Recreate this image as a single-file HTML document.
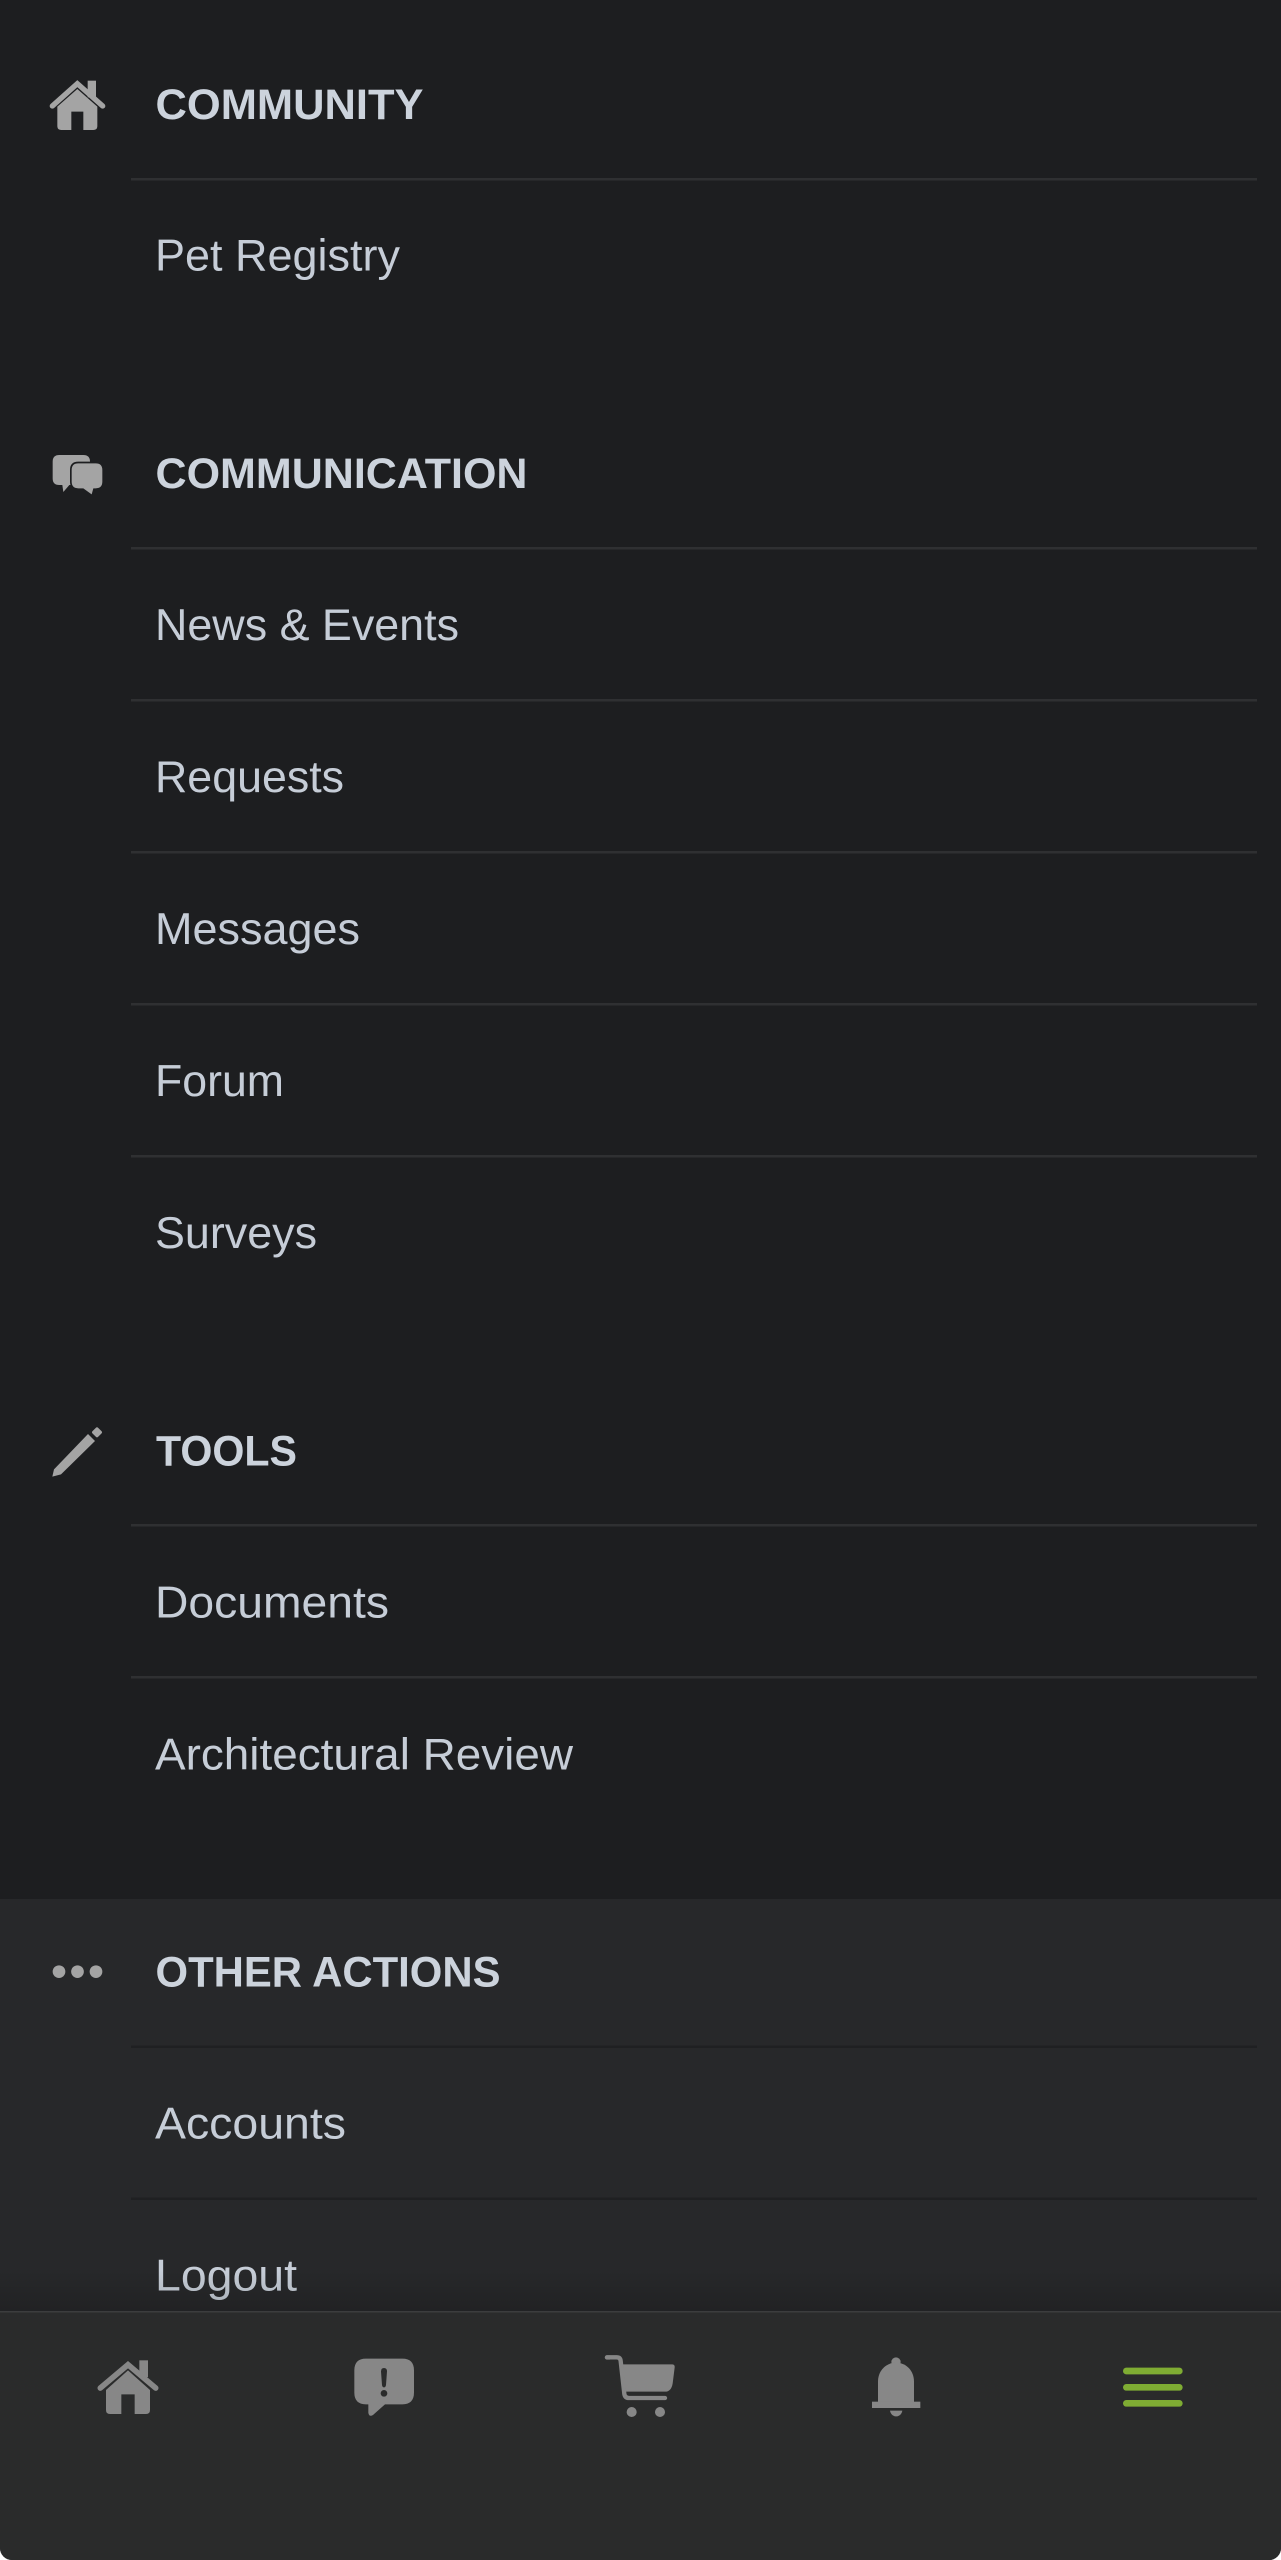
<!DOCTYPE html>
<html lang="en"><head><meta charset="utf-8"><title>Menu</title>
<style>
html,body{margin:0;padding:0;background:#fff;width:1281px;height:2560px;overflow:hidden}
#r{position:absolute;left:0;top:0;width:1281px;height:2560px;overflow:hidden;background:#1d1e20;border-radius:0 0 12px 12px}
svg{display:block}
text{font-family:"Liberation Sans",sans-serif}
.h{font-size:43px;font-weight:700;fill:#ccd3dc}
.t{font-size:44.500px;font-weight:400;fill:#c6cdd7}
</style></head><body><div id="r">
<svg width="1281" height="2560" viewBox="0 0 1281 2560" xmlns="http://www.w3.org/2000/svg">
<defs>
<linearGradient id="s" x1="0" y1="0" x2="0" y2="1"><stop offset="0" stop-color="#000" stop-opacity="0"/><stop offset="1" stop-color="#000" stop-opacity=".16"/></linearGradient>
</defs>
<rect x="0" y="1899" width="1281" height="420" fill="#27282a"/>

<g fill="#2f3032">
<rect x="131" y="178" width="1126" height="2.500"/>
<rect x="131" y="547" width="1126" height="2.500"/>
<rect x="131" y="699" width="1126" height="2.500"/>
<rect x="131" y="851" width="1126" height="2.500"/>
<rect x="131" y="1003" width="1126" height="2.500"/>
<rect x="131" y="1155" width="1126" height="2.500"/>
<rect x="131" y="1524" width="1126" height="2.500"/>
<rect x="131" y="1676" width="1126" height="2.500"/>
</g>
<g fill="#1f2022">
<rect x="131" y="2045.500" width="1126" height="2.500"/>
<rect x="131" y="2197.500" width="1126" height="2.500"/>
</g>

<text class="h" x="155.500" y="119" textLength="268" lengthAdjust="spacingAndGlyphs">COMMUNITY</text>
<text class="t" x="155" y="270.500" textLength="245" lengthAdjust="spacingAndGlyphs">Pet Registry</text>
<text class="h" x="155.500" y="488" textLength="372" lengthAdjust="spacingAndGlyphs">COMMUNICATION</text>
<text class="t" x="155" y="640" textLength="304" lengthAdjust="spacingAndGlyphs">News &amp; Events</text>
<text class="t" x="155" y="792" textLength="189" lengthAdjust="spacingAndGlyphs">Requests</text>
<text class="t" x="155" y="944" textLength="205" lengthAdjust="spacingAndGlyphs">Messages</text>
<text class="t" x="155" y="1096" textLength="129" lengthAdjust="spacingAndGlyphs">Forum</text>
<text class="t" x="155" y="1248" textLength="162" lengthAdjust="spacingAndGlyphs">Surveys</text>
<text class="h" x="156" y="1465.500" textLength="141" lengthAdjust="spacingAndGlyphs">TOOLS</text>
<text class="t" x="155" y="1617.500" textLength="234" lengthAdjust="spacingAndGlyphs">Documents</text>
<text class="t" x="155" y="1769.500" textLength="418" lengthAdjust="spacingAndGlyphs">Architectural Review</text>
<text class="h" x="155.500" y="1986.500" textLength="345" lengthAdjust="spacingAndGlyphs">OTHER ACTIONS</text>
<text class="t" x="155" y="2138.500" textLength="191" lengthAdjust="spacingAndGlyphs">Accounts</text>
<text class="t" x="155" y="2290.500" textLength="142" lengthAdjust="spacingAndGlyphs">Logout</text>

<!-- section house -->
<g transform="translate(0,40) scale(.33333)" fill="#a4a4a4">
<path d="M263 122h25v50h-25z"/>
<path d="M157 198 232 131 308 198" fill="none" stroke="#a4a4a4" stroke-width="16" stroke-linecap="round" stroke-linejoin="miter"/>
<path d="M172 200 232 147 292 200V258Q292 270 280 270H250V215H214V270H184Q172 270 172 258Z"/>
</g>
<!-- bubbles -->
<g transform="translate(0,420) scale(.33333)" fill="#a4a4a4">
<path d="M178 105H250Q270 105 270 125V175Q270 195 250 195H208L190 216 187 195H178Q158 195 158 175V125Q158 105 178 105Z"/>
<path d="M235 130H287Q307 130 307 150V185Q307 205 287 205H280L275 223 250 205H235Q215 205 215 185V150Q215 130 235 130Z" stroke="#1d1e20" stroke-width="10" paint-order="stroke"/>
</g>
<!-- pencil -->
<g transform="translate(0,1400) scale(.33333)" fill="#a4a4a4">
<path d="M157 230 162 208 264 102 285 123 183 223Z"/>
<rect x="279" y="85" width="24" height="24" rx="5" transform="rotate(45 291 97)"/>
</g>
<!-- dots -->
<g transform="translate(0,1880) scale(.33333)" fill="#a4a4a4">
<circle cx="177" cy="275" r="19"/><circle cx="232.500" cy="275" r="19"/><circle cx="288" cy="275" r="19"/>
</g>

<!-- tab bar -->
<rect x="0" y="2270" width="1281" height="42" fill="url(#s)"/>
<rect x="0" y="2312" width="1281" height="248" fill="#2a2b2b"/>
<rect x="0" y="2311" width="1281" height="1.500" fill="#3c3d3e"/>

<g transform="translate(0,2280) scale(.33333)" fill="#878787">
<path d="M418 241h26v50h-26z"/>
<path d="M301 324 384 254 467 324" fill="none" stroke="#878787" stroke-width="17" stroke-linecap="round"/>
<path d="M318 330 384 271 450 330V390Q450 402 438 402H404V343H364V402H330Q318 402 318 390Z"/>
<path fill-rule="evenodd" d="M1098 236H1207Q1242 236 1242 271V338Q1242 373 1207 373H1155L1119 405Q1107 412 1105 398V373H1098Q1063 373 1063 338V271Q1063 236 1098 236ZM1152 264Q1143 264 1143 274L1146 315Q1147 322 1152 322 1157 322 1158 315L1161 274Q1161 264 1152 264ZM1152 330A10 10 0 1 0 1152 350 10 10 0 1 0 1152 330Z"/>
</g>
<!-- cart -->
<g transform="translate(560,2340) scale(.33333)" fill="#878787">
<path d="M178 73H336Q345 73 344 82L338 130Q334 155 315 155H192Z"/>
<path d="M141 52H170Q181 52 182 63L193 162Q195 174 207 174H315" fill="none" stroke="#878787" stroke-width="13" stroke-linecap="round"/>
<path d="M141 46A6.500 6.500 0 0 0 141 59H150V46Z"/>
<circle cx="215" cy="216" r="15"/><circle cx="300" cy="216" r="15"/>
</g>
<!-- bell -->
<g transform="translate(840,2340) scale(.33333)" fill="#878787">
<circle cx="168" cy="66" r="14"/>
<path d="M114 190V125C114 90 140 68 168 68S222 90 222 125V190Z"/>
<rect x="96" y="185" width="145" height="19"/>
<path d="M150 212H187C183 235 154 235 150 212Z"/>
</g>
<!-- menu -->
<g transform="translate(1100,2340) scale(.33333)" fill="#7fac33">
<rect x="69" y="83" width="179" height="20" rx="10"/>
<rect x="69" y="132" width="179" height="20" rx="10"/>
<rect x="69" y="180" width="179" height="20" rx="10"/>
</g>
</svg>
</div></body></html>
